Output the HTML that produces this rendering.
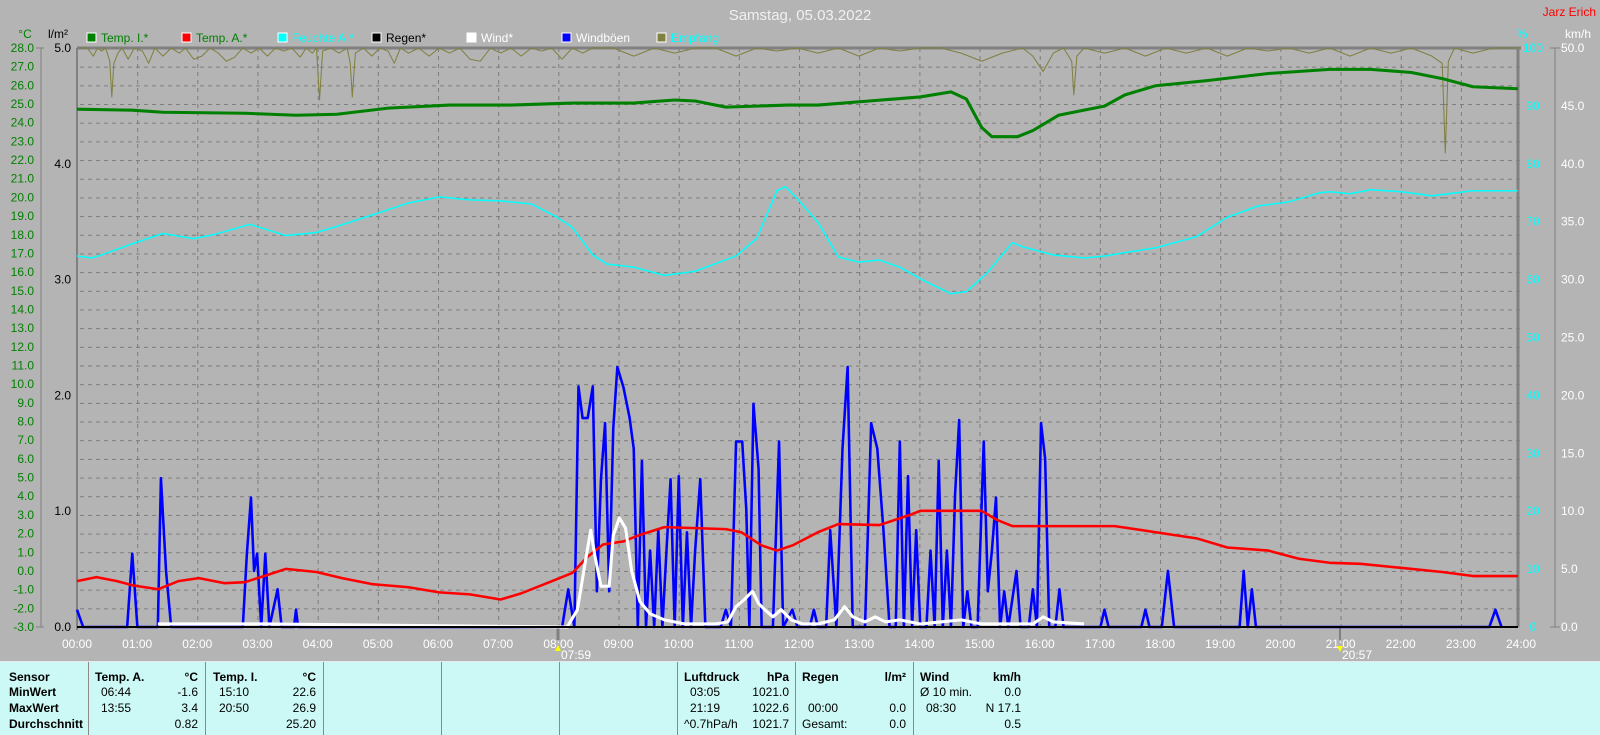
<!DOCTYPE html>
<html><head><meta charset="utf-8"><style>
html,body{margin:0;padding:0;background:#b4b4b4;width:1600px;height:734px;overflow:hidden;font-family:"Liberation Sans",sans-serif}
svg{position:absolute;left:0;top:0}
#panel{position:absolute;left:0;top:661px;width:1600px;height:73px;background:#ccf9f5;border-top:1px solid #e8e8e8;font-size:12px;color:#000}
.sep{position:absolute;top:0;width:1px;height:73px;background:#8a8a8a}
.t{position:absolute;white-space:nowrap;line-height:14px}
.b{font-weight:bold}
.r{text-align:right}
</style></head><body>
<svg width="1600" height="661" viewBox="0 0 1600 661" font-family="Liberation Sans, sans-serif">
<defs>
<pattern id="hg" x="0" y="48" width="1444" height="18.677" patternUnits="userSpaceOnUse"><line x1="0" y1="0.5" x2="1444" y2="0.5" stroke="#7c7c7c" stroke-dasharray="4 4"/></pattern>
<pattern id="vg" x="77" y="0" width="60.17" height="600" patternUnits="userSpaceOnUse"><line x1="0.5" y1="0" x2="0.5" y2="600" stroke="#7c7c7c" stroke-dasharray="4 4"/></pattern>
</defs>
<rect x="77" y="48" width="1444" height="579" fill="url(#hg)"/>
<rect x="77" y="48" width="1444" height="579" fill="url(#vg)"/>
<line x1="77" y1="48" x2="1521" y2="48" stroke="#808080" stroke-width="3"/>
<line x1="77" y1="48" x2="77" y2="630" stroke="#808080" stroke-width="2"/>
<line x1="1518" y1="48" x2="1518" y2="627" stroke="#808080" stroke-width="3"/>
<line x1="558" y1="627" x2="558" y2="640" stroke="#808080" stroke-width="3"/>
<line x1="1340" y1="627" x2="1340" y2="640" stroke="#808080" stroke-width="2"/>
<!-- left axis -->
<line x1="41" y1="48" x2="41" y2="627" stroke="#808080"/>
<line x1="1555" y1="48" x2="1555" y2="627" stroke="#808080"/>
<text x="800" y="20" font-size="15" fill="#f0f0f0" text-anchor="middle">Samstag, 05.03.2022</text>
<text x="1596" y="16" font-size="12" fill="#ff0000" text-anchor="end">Jarz Erich</text>
<text x="25" y="38" font-size="12" fill="#008000" text-anchor="middle">°C</text>
<text x="58" y="38" font-size="12" fill="#000" text-anchor="middle">l/m²</text>
<text x="1522" y="38" font-size="12" fill="#00ffff" text-anchor="middle">%</text>
<text x="1578" y="38" font-size="12" fill="#fff" text-anchor="middle">km/h</text>
<!-- legend -->
<g font-size="12">
<rect x="87" y="33" width="9" height="9" fill="#008000" stroke="#fff"/><text x="101" y="42" fill="#008000">Temp. I.*</text>
<rect x="182" y="33" width="9" height="9" fill="#ff0000" stroke="#fff"/><text x="196" y="42" fill="#008000">Temp. A.*</text>
<rect x="278" y="33" width="9" height="9" fill="#00ffff" stroke="#fff"/><text x="292" y="42" fill="#00ffff">Feuchte A.*</text>
<rect x="372" y="33" width="9" height="9" fill="#000" stroke="#fff"/><text x="386" y="42" fill="#000">Regen*</text>
<rect x="467" y="33" width="9" height="9" fill="#fff" stroke="#fff"/><text x="481" y="42" fill="#fff">Wind*</text>
<rect x="562" y="33" width="9" height="9" fill="#0000ff" stroke="#fff"/><text x="576" y="42" fill="#fff">Windböen</text>
<rect x="657" y="33" width="9" height="9" fill="#808040" stroke="#fff"/><text x="671" y="42" fill="#00ffff">Empfang</text>
</g>
<g font-size="12" fill="#008000" text-anchor="end">
<text x="34" y="52">28.0</text><text x="34" y="70.7">27.0</text><text x="34" y="89.4">26.0</text><text x="34" y="108">25.0</text><text x="34" y="126.7">24.0</text><text x="34" y="145.4">23.0</text><text x="34" y="164.1">22.0</text><text x="34" y="182.7">21.0</text><text x="34" y="201.4">20.0</text><text x="34" y="220.1">19.0</text><text x="34" y="238.8">18.0</text><text x="34" y="257.4">17.0</text><text x="34" y="276.1">16.0</text><text x="34" y="294.8">15.0</text><text x="34" y="313.5">14.0</text><text x="34" y="332.2">13.0</text><text x="34" y="350.8">12.0</text><text x="34" y="369.5">11.0</text><text x="34" y="388.2">10.0</text><text x="34" y="406.9">9.0</text><text x="34" y="425.5">8.0</text><text x="34" y="444.2">7.0</text><text x="34" y="462.9">6.0</text><text x="34" y="481.6">5.0</text><text x="34" y="500.2">4.0</text><text x="34" y="518.9">3.0</text><text x="34" y="537.6">2.0</text><text x="34" y="556.3">1.0</text><text x="34" y="574.9">0.0</text><text x="34" y="593.6">-1.0</text><text x="34" y="612.3">-2.0</text><text x="34" y="631">-3.0</text>
</g>
<g font-size="12" fill="#000" text-anchor="end">
<text x="71" y="52">5.0</text><text x="71" y="167.8">4.0</text><text x="71" y="283.6">3.0</text><text x="71" y="399.4">2.0</text><text x="71" y="515.2">1.0</text><text x="71" y="631">0.0</text>
</g>
<g stroke="#808080">
<line x1="36" y1="48" x2="44" y2="48"/><line x1="36" y1="627" x2="44" y2="627"/>
<line x1="1550" y1="48" x2="1560" y2="48"/><line x1="1550" y1="627" x2="1560" y2="627"/>
</g>
<g font-size="12" fill="#00ffff" text-anchor="middle">
<text x="1533" y="52">100</text><text x="1533" y="109.9">90</text><text x="1533" y="167.8">80</text><text x="1533" y="225.7">70</text><text x="1533" y="283.6">60</text><text x="1533" y="341.5">50</text><text x="1533" y="399.4">40</text><text x="1533" y="457.3">30</text><text x="1533" y="515.2">20</text><text x="1533" y="573.1">10</text><text x="1533" y="631">0</text>
</g>
<g font-size="12" fill="#fff">
<text x="1561" y="52">50.0</text><text x="1561" y="109.9">45.0</text><text x="1561" y="167.8">40.0</text><text x="1561" y="225.7">35.0</text><text x="1561" y="283.6">30.0</text><text x="1561" y="341.5">25.0</text><text x="1561" y="399.4">20.0</text><text x="1561" y="457.3">15.0</text><text x="1561" y="515.2">10.0</text><text x="1561" y="573.1">5.0</text><text x="1561" y="631">0.0</text>
</g>
<g font-size="12" fill="#fff" text-anchor="middle">
<text x="77" y="648">00:00</text><text x="137.2" y="648">01:00</text><text x="197.3" y="648">02:00</text><text x="257.5" y="648">03:00</text><text x="317.7" y="648">04:00</text><text x="377.9" y="648">05:00</text><text x="438" y="648">06:00</text><text x="498.2" y="648">07:00</text><text x="558.4" y="648">08:00</text><text x="618.5" y="648">09:00</text><text x="678.7" y="648">10:00</text><text x="738.9" y="648">11:00</text><text x="799" y="648">12:00</text><text x="859.2" y="648">13:00</text><text x="919.4" y="648">14:00</text><text x="979.6" y="648">15:00</text><text x="1039.7" y="648">16:00</text><text x="1099.9" y="648">17:00</text><text x="1160.1" y="648">18:00</text><text x="1220.2" y="648">19:00</text><text x="1280.4" y="648">20:00</text><text x="1340.6" y="648">21:00</text><text x="1400.7" y="648">22:00</text><text x="1460.9" y="648">23:00</text><text x="1521" y="648">24:00</text>
<text x="576" y="659" font-size="12">07:59</text><text x="1357" y="659" font-size="12">20:57</text>
</g>
<path d="M555 651 l3 -6 l3 6z" fill="#ffff00"/><path d="M1337 646 l3 6 l3 -6z" fill="#ffff00"/>
<g transform="translate(77,48) scale(1.0234,1.0194) translate(-76,-47)" fill="none" stroke-linejoin="round">
<polyline stroke="#808040" stroke-width="1" points="76,47 86,47 92,55 96,47 100,50 104,47 108,60 110,95 112,62 116,52 120,47 126,58 132,47 140,50 146,62 152,47 160,55 168,47 176,52 182,47 190,58 198,55 206,47 214,52 222,60 230,56 238,47 246,52 254,47 262,55 270,47 278,50 286,47 294,56 300,47 306,52 310,47 313,98 316,50 324,47 332,52 340,47 343,62 345,95 348,52 356,47 364,55 372,47 380,50 386,62 392,47 400,52 410,47 420,55 430,47 440,52 450,47 460,58 470,60 480,47 490,52 500,47 510,55 520,47 530,50 540,47 550,58 560,47 570,52 580,47 600,47 620,55 640,47 660,52 680,47 700,47 720,55 740,47 760,50 780,47 800,52 820,47 840,55 860,47 880,50 900,47 920,47 940,52 960,60 980,52 1000,47 1010,55 1020,70 1030,52 1040,47 1048,60 1050,93 1053,55 1060,47 1080,52 1100,47 1120,55 1140,47 1160,52 1180,47 1200,55 1220,47 1240,50 1260,47 1280,52 1300,47 1320,55 1340,47 1360,52 1380,47 1400,55 1410,62 1413,150 1416,60 1422,47 1440,52 1460,47 1484,47"/>
<polyline stroke="#00ffff" stroke-width="1.5" points="76,251 90,253 100,250 130,239 160,229 190,234 210,230 245,220 280,231 310,228 330,222 370,209 400,199 430,193 460,196 490,197 520,200 545,213 560,223 580,250 594,259 620,262 650,270 680,266 720,251 740,234 760,187 768,183 780,195 800,218 820,252 840,257 860,255 880,262 905,276 930,288 945,286 965,268 990,238 1000,242 1030,250 1060,253 1080,251 1130,243 1170,232 1200,213 1230,202 1260,198 1290,189 1300,188 1320,190 1340,186 1370,188 1400,192 1440,187 1484,187"/>
<polyline stroke="#008000" stroke-width="3" points="76,107 130,108 160,110 240,111 290,113 330,112 380,106 440,103 500,103 560,101 620,101 660,98 680,99 710,105 770,103 800,103 850,99 900,95 930,90 945,97 960,125 970,134 995,134 1010,128 1035,113 1060,108 1080,104 1100,93 1130,84 1180,79 1240,72 1300,68 1340,68 1380,71 1410,77 1440,85 1484,87"/>
<polyline stroke="#0000ff" stroke-width="2.5" points="76,598 82,615 125,615 130,543 135,615 155,615 158,469 163,560 168,615 238,615 242,543 246,488 249,560 252,543 256,615 260,543 264,615 272,578 276,615 288,615 290,598 292,615 550,615 556,578 562,615 566,379 570,410 575,410 580,379 584,580 588,470 592,415 596,580 600,420 604,360 610,380 616,410 620,440 624,615 628,452 632,615 636,540 640,615 644,520 648,615 652,540 656,470 660,615 664,467 668,615 672,522 676,615 680,540 685,470 690,615 705,615 710,598 715,615 720,433 726,433 730,500 733,615 737,396 742,460 745,615 756,615 762,433 766,615 775,598 780,615 792,615 796,598 800,615 808,615 812,520 818,615 824,440 829,360 834,615 846,615 852,415 858,440 864,520 870,615 876,615 880,433 884,615 888,467 892,615 896,520 900,615 906,615 910,540 914,615 918,452 922,615 926,540 930,615 934,485 938,412 942,615 946,580 950,615 956,615 962,433 966,580 970,540 974,488 978,615 982,580 986,615 994,560 998,615 1006,615 1010,578 1014,615 1018,415 1022,450 1026,615 1032,615 1036,578 1040,615 1076,615 1080,598 1084,615 1116,615 1120,598 1124,615 1136,615 1142,560 1148,615 1212,615 1216,560 1220,615 1224,578 1228,615 1456,615 1462,598 1468,615"/>
<polyline stroke="#ff0000" stroke-width="2.5" points="76,570 95,566 115,570 130,574 155,578 175,570 195,567 220,572 240,571 265,563 280,558 310,561 335,567 365,573 400,576 430,581 460,583 490,588 510,582 540,570 560,562 575,546 590,534 610,531 625,525 650,517 710,519 725,522 745,535 760,540 775,535 800,522 820,514 860,515 890,505 900,501 960,501 975,510 990,516 1040,516 1090,516 1130,522 1170,528 1200,537 1240,540 1270,548 1300,552 1330,553 1360,556 1410,561 1440,565 1484,565"/>
<polyline stroke="#ffffff" stroke-width="3" points="155,612 165,612 240,612 260,612 555,615 565,598 572,555 578,520 582,545 588,575 596,575 600,525 606,508 612,518 618,560 626,590 636,602 650,608 670,612 700,612 712,610 720,595 728,588 736,580 742,592 748,598 756,605 764,598 774,608 785,612 800,612 816,608 826,595 834,605 846,610 856,605 866,610 880,608 900,612 920,610 940,608 960,612 980,612 1010,612 1020,605 1030,610 1060,612"/>
</g>
<line x1="77" y1="627" x2="1518" y2="627" stroke="#000" stroke-width="2"/>
</svg>
<div id="panel">
<div class="sep" style="left:88px"></div><div class="sep" style="left:205px"></div><div class="sep" style="left:323px"></div><div class="sep" style="left:441px"></div><div class="sep" style="left:559px"></div><div class="sep" style="left:677px"></div><div class="sep" style="left:795px"></div><div class="sep" style="left:913px"></div>
<div class="t b" style="left:9px;top:8px">Sensor</div><div class="t b" style="left:9px;top:23px">MinWert</div><div class="t b" style="left:9px;top:39px">MaxWert</div><div class="t b" style="left:9px;top:55px">Durchschnitt</div>
<div class="t b" style="left:95px;top:8px">Temp. A.</div><div class="t b r" style="left:150px;width:48px;top:8px">°C</div>
<div class="t" style="left:101px;top:23px">06:44</div><div class="t r" style="left:150px;width:48px;top:23px">-1.6</div>
<div class="t" style="left:101px;top:39px">13:55</div><div class="t r" style="left:150px;width:48px;top:39px">3.4</div>
<div class="t r" style="left:150px;width:48px;top:55px">0.82</div>
<div class="t b" style="left:213px;top:8px">Temp. I.</div><div class="t b r" style="left:268px;width:48px;top:8px">°C</div>
<div class="t" style="left:219px;top:23px">15:10</div><div class="t r" style="left:268px;width:48px;top:23px">22.6</div>
<div class="t" style="left:219px;top:39px">20:50</div><div class="t r" style="left:268px;width:48px;top:39px">26.9</div>
<div class="t r" style="left:268px;width:48px;top:55px">25.20</div>
<div class="t b" style="left:684px;top:8px">Luftdruck</div><div class="t b r" style="left:740px;width:49px;top:8px">hPa</div>
<div class="t" style="left:690px;top:23px">03:05</div><div class="t r" style="left:740px;width:49px;top:23px">1021.0</div>
<div class="t" style="left:690px;top:39px">21:19</div><div class="t r" style="left:740px;width:49px;top:39px">1022.6</div>
<div class="t" style="left:684px;top:55px">^0.7hPa/h</div><div class="t r" style="left:740px;width:49px;top:55px">1021.7</div>
<div class="t b" style="left:802px;top:8px">Regen</div><div class="t b r" style="left:860px;width:46px;top:8px">l/m²</div>
<div class="t" style="left:808px;top:39px">00:00</div><div class="t r" style="left:860px;width:46px;top:39px">0.0</div>
<div class="t" style="left:802px;top:55px">Gesamt:</div><div class="t r" style="left:860px;width:46px;top:55px">0.0</div>
<div class="t b" style="left:920px;top:8px">Wind</div><div class="t b r" style="left:970px;width:51px;top:8px">km/h</div>
<div class="t" style="left:920px;top:23px">Ø 10 min.</div><div class="t r" style="left:970px;width:51px;top:23px">0.0</div>
<div class="t" style="left:926px;top:39px">08:30</div><div class="t r" style="left:970px;width:51px;top:39px">N 17.1</div>
<div class="t r" style="left:970px;width:51px;top:55px">0.5</div>
</div>
</body></html>
